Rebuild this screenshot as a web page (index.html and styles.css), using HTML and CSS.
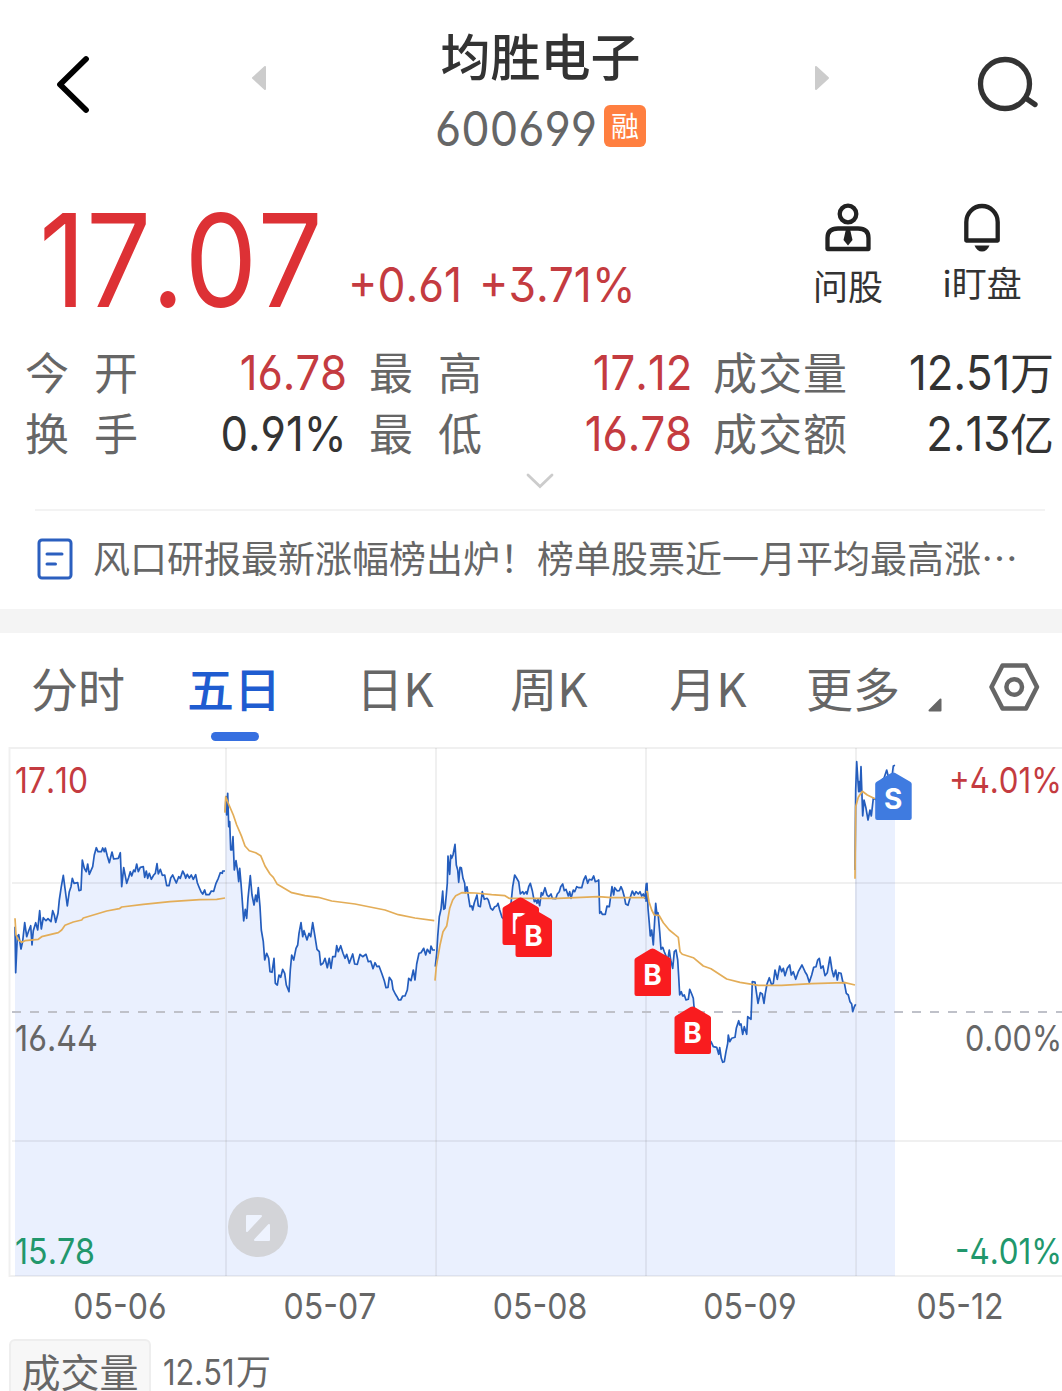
FILE: index.html
```html
<!DOCTYPE html>
<html lang="zh-CN">

<head>
	<meta charset="utf-8">
	<title>均胜电子 600699</title>
	<link rel="stylesheet" href="styles.css">
</head>

<body>
	<header class="topbar">
		<svg class="back" width="40" height="64" viewBox="0 0 40 64">
			<path d="M33 7 L7 32.500 L33 58" fill="none" stroke="#000" stroke-width="5.800" stroke-linecap="round" stroke-linejoin="round" />
		</svg>
		<svg class="prev" width="16" height="26" viewBox="0 0 16 26">
			<path d="M14 2 L14 24 L2 13 Z" fill="#ccc" stroke="#ccc" stroke-width="2" stroke-linejoin="round" />
		</svg>
		<div class="stock">
			<h1>均胜电子</h1>
			<div class="code"><span class="num">600699</span><span class="tag">融</span></div>
		</div>
		<svg class="next" width="16" height="26" viewBox="0 0 16 26">
			<path d="M2 2 L2 24 L14 13 Z" fill="#ccc" stroke="#ccc" stroke-width="2" stroke-linejoin="round" />
		</svg>
		<svg class="search" width="64" height="60" viewBox="0 0 64 60">
			<g fill="none" stroke="#333" stroke-width="5.300" stroke-linecap="round">
				<circle cx="30" cy="30" r="24.500" />
				<path d="M52 45 L60 50.500" />
			</g>
		</svg>
	</header>

	<section class="quote">
		<div class="price"><span class="num">17.07</span></div>
		<div class="change"><span class="num">+0.61</span><span class="num">+3.71%</span></div>
		<div class="action ask">
			<svg width="48" height="50" viewBox="0 0 48 50">
				<g fill="none" stroke="#222" stroke-width="4.300">
					<circle cx="24" cy="11" r="8.300" />
					<path d="M3.500 46 V35 Q3.500 25.500 14 25.500 H34 Q44.500 25.500 44.500 35 V46 Z" stroke-linejoin="round" />
				</g>
				<path d="M22 26 H26 L28.500 37 L24 42.500 L19.500 37 Z" fill="#222" />
			</svg>
			<span>问股</span>
		</div>
		<div class="action watch">
			<svg width="48" height="50" viewBox="0 0 48 50">
				<path d="M8.300 37.500 V19 A15.700 16 0 0 1 39.700 19 V37.500 Z" fill="none" stroke="#222" stroke-width="4.300" stroke-linejoin="round" />
				<path d="M16.500 42.500 H31.500 Q29 48.500 24 48.500 Q19 48.500 16.500 42.500 Z" fill="#222" />
			</svg>
			<span>i盯盘</span>
		</div>
	</section>

	<section class="stats">
		<span class="label">今 开</span><span class="value red"><span class="num">16.78</span></span>
		<span class="label">最 高</span><span class="value red"><span class="num">17.12</span></span>
		<span class="label">成交量</span><span class="value"><span class="num">12.51</span>万</span>
		<span class="label">换 手</span><span class="value"><span class="num">0.91%</span></span>
		<span class="label">最 低</span><span class="value red"><span class="num">16.78</span></span>
		<span class="label">成交额</span><span class="value"><span class="num">2.13</span>亿</span>
	</section>
	<div class="expand">
		<svg width="30" height="18" viewBox="0 0 30 18">
			<path d="M3 3 L15 14.500 L27 3" fill="none" stroke="#ccc" stroke-width="2.800" stroke-linecap="round" />
		</svg>
	</div>

	<section class="news">
		<svg width="36" height="42" viewBox="0 0 36 42">
			<g fill="none" stroke="#2b5fbf" stroke-width="3" stroke-linecap="round">
				<rect x="2" y="2" width="32" height="38" rx="3" />
				<path d="M10 16 H25 M10 26 H18.500" />
			</g>
		</svg>
		<p>风口研报最新涨幅榜出炉！榜单股票近一月平均最高涨<span class="dots">⋯</span></p>
	</section>

	<nav class="tabs">
		<span>分时</span>
		<span class="active">五日</span>
		<span>日K</span>
		<span>周K</span>
		<span>月K</span>
		<span>更多</span>
		<svg class="corner" width="14" height="14" viewBox="0 0 14 14">
			<path d="M12.500 1.500 V12.500 H1.500 Z" fill="#666" stroke="#666" stroke-width="2" stroke-linejoin="round" />
		</svg>
		<svg class="gear" width="52" height="48" viewBox="0 0 52 48">
			<g fill="none" stroke="#666" stroke-width="4.500" stroke-linejoin="round">
				<path d="M14.500 2.500 H38 L49 24 L38 45.500 H14.500 L3.500 24 Z" />
				<circle cx="26.200" cy="24" r="7.800" />
			</g>
		</svg>
	</nav>

	<svg class="chart" width="1062" height="531" viewBox="0 747 1062 531">
		<defs>
			<path id="house" d="M2 48 Q0 48 0 46 V12 Q0 10.500 1.500 9.800 L16 1 Q18 0 20 1 L35 9.800 Q36.500 10.500 36.500 12 V46 Q36.500 48 34.500 48 Z" />
		</defs>
		<g id="areas" fill="#eaf0fe"></g>
		<g fill="none" stroke="#000" stroke-opacity=".06" stroke-width="2">
			<path d="M1062 748 H9.500 V1276 H1062" />
			<path d="M12 883 H1062 M12 1141 H1062" />
			<path d="M226 748 V1276 M436 748 V1276 M646 748 V1276 M856 748 V1276" />
		</g>
		<path d="M12 1012 H1062" stroke="#bfc1c9" stroke-width="2" stroke-dasharray="9 9" />
		<g id="lines" fill="none" stroke-width="1.700" stroke-linejoin="round"></g>

		<g class="axis">
			<text x="15" y="793" textLength="73" lengthAdjust="spacingAndGlyphs" fill="#c43b40">17.10</text>
			<text x="15" y="1051" textLength="83" lengthAdjust="spacingAndGlyphs" fill="#666">16.44</text>
			<text x="15" y="1264" textLength="80" lengthAdjust="spacingAndGlyphs" fill="#21976c">15.78</text>
			<text x="949" y="793" textLength="113" lengthAdjust="spacingAndGlyphs" fill="#c43b40">+4.01%</text>
			<text x="965" y="1051" textLength="97" lengthAdjust="spacingAndGlyphs" fill="#666">0.00%</text>
			<text x="955" y="1264" textLength="107" lengthAdjust="spacingAndGlyphs" fill="#21976c">-4.01%</text>
		</g>

		<g class="marks">
			<g transform="translate(502.500 897)"><use href="#house" fill="#f91c1f" /><text x="18" y="37">B</text></g>
			<g transform="translate(515.500 909)"><use href="#house" fill="#f91c1f" /><text x="18" y="37">B</text></g>
			<g transform="translate(634.500 948)"><use href="#house" fill="#f91c1f" /><text x="18" y="37">B</text></g>
			<g transform="translate(674.500 1006)"><use href="#house" fill="#f91c1f" /><text x="18" y="37">B</text></g>
			<g transform="translate(875.200 772)"><use href="#house" fill="#3f7be0" /><text x="18" y="37">S</text></g>
		</g>

		<circle cx="258" cy="1227" r="30" fill="#d3d4d8" />
		<path d="M247 1216 H261 L247 1231 Z M269 1225 V1240 H255 Z" fill="#eef3fe" stroke="#eef3fe" stroke-width="2" stroke-linejoin="round" />
	</svg>

	<div class="dates">
		<span class="num">05-06</span><span class="num">05-07</span><span class="num">05-08</span><span class="num">05-09</span><span class="num">05-12</span>
	</div>
	<div class="volume">
		<span class="box">成交量</span>
		<span class="amount"><span class="num">12.51</span>万</span>
	</div>
	<script src="script.js"></script>
</body>

</html>
```
FILE: styles.css
```css
* {
	box-sizing: border-box;
}

body {
	margin: 0;
	width: 1062px;
	height: 1391px;
	overflow: hidden;
	background: #fff;
	color: #666;
	font-family: "Noto Sans CJK SC", sans-serif;
}

svg {
	display: block;
	flex: none;
}

/* narrow figures */
.num {
	display: inline-block;
	font-family: Inter, sans-serif;
	font-feature-settings: "ss01";
	font-kerning: none;
	transform: scaleX(.91);
	transform-origin: left;
}

.topbar {
	display: grid;
	grid-template-columns: 250px 150px 281px 131px 250px;
	grid-template-rows: 170px;
}

.topbar > * {
	grid-row: 1;
}

.back {
	grid-column: 1;
	margin: 52px 0 0 53px;
}

.prev {
	grid-column: 2;
	margin: 65px 0 0 1px;
}

.stock {
	grid-column: 3;
	text-align: center;
}

.next {
	grid-column: 5;
	margin: 65px 0 0 2px;
}

.search {
	grid-column: 5;
	margin: 54px 0 0 163px;
}

h1 {
	margin: 19px 0 0;
	color: #333;
	font-size: 50px;
	font-weight: 500;
	line-height: 70px;
}

.code {
	display: flex;
	justify-content: center;
	margin-top: 7px;
	font-size: 48px;
	line-height: 66px;
}

.code .num {
	width: 169px;
	text-align: left;
	transform: scaleX(.94);
}

.tag {
	width: 42px;
	height: 42px;
	margin-top: 9px;
	border-radius: 6px;
	background: #ff7f40;
	color: #fff;
	font-size: 28px;
	line-height: 41px;
	text-align: center;
}

.quote {
	display: grid;
	grid-template-columns: 348px 430px 140px 128px;
	height: 171px;
}

.price {
	padding-left: 39px;
	color: #dd3135;
	font-size: 129px;
	line-height: 180px;
}

.price .num {
	display: block;
	transform: scaleX(.895);
}

.change {
	display: flex;
	padding-top: 84px;
	color: #c43b40;
	font-size: 48px;
	line-height: 62px;
}

.change .num {
	width: 131px;
	transform: scaleX(.925);
}

.action {
	display: flex;
	flex-direction: column;
	align-items: center;
	padding-top: 33px;
	color: #333;
	font-size: 35px;
	line-height: 50px;
}

.ask span {
	margin-top: 7px;
}

.watch span {
	margin-top: 4px;
}

.stats {
	display: grid;
	grid-template-columns: 138px 209px 135px 210px 155px 207px;
	grid-template-rows: 61px 61px;
	font-size: 44px;
	line-height: 60px;
	white-space: nowrap;
}

.label {
	padding-left: 25px;
	text-align-last: justify;
}

.label:nth-child(6n + 3) {
	padding-left: 22px;
}

.label:nth-child(6n + 5) {
	padding-left: 21px;
}

.value {
	color: #333;
	text-align: right;
}

.value .num {
	font-size: 48px;
	transform-origin: right;
}

.value.red {
	color: #c43b40;
}

.expand {
	display: flex;
	justify-content: center;
	height: 46px;
	padding: 9px 0 0 17px;
}

.news {
	display: flex;
	align-items: center;
	gap: 20px;
	height: 100px;
	margin: 0 17px 0 35px;
	padding: 0 0 2px 2px;
	border-top: 2px solid #f3f3f3;
}

.news p {
	margin: -5px 0 0;
	font-size: 37px;
	line-height: 54px;
	white-space: nowrap;
}

.tabs {
	display: grid;
	grid-template-columns: 156px 156px 166px 142px 176px 114px 78px 74px;
	height: 138px;
	border-top: 24px solid #f4f4f4;
	font-size: 47px;
	line-height: 108px;
	text-align: center;
}

.active {
	color: #1f5cd0;
	font-weight: 500;
}

.active::after {
	content: "";
	display: block;
	width: 48px;
	height: 9px;
	margin: -9px auto 0;
	border-radius: 5px;
	background: #366fe0;
	transform: translateX(1px);
}

.corner {
	margin: 65px 0 0 18px;
}

.gear {
	margin: 30px 0 0;
}

.axis text {
	font: 36px Inter, sans-serif;
	font-feature-settings: "ss01";
	font-kerning: none;
}

.marks text {
	fill: #fff;
	font: bold 28px Inter, sans-serif;
	text-anchor: middle;
}

.dates {
	display: grid;
	grid-template-columns: repeat(5, 210px);
	padding-left: 15px;
	font-size: 36px;
	line-height: 57px;
	text-align: center;
}

.dates .num {
	transform: scaleX(.89);
	transform-origin: center;
}

.volume {
	display: flex;
	gap: 12px;
	padding: 4px 0 0 9px;
	font-size: 35px;
	line-height: 62px;
}

.box {
	width: 142px;
	border: 2px solid #eee;
	border-radius: 6px;
	background: #f7f7f7;
	font-size: 39px;
	line-height: 58px;
	text-align: center;
}

.amount .num {
	width: 73px;
	transform: scaleX(.88);
}
```
FILE: script.js
```js
// x,y pairs of every day, in thirds of a pixel from the day's origin
var days = [
	{
		x: 0, y: 740, from: 45, to: 678,
		price: "45,560 47,698 52,590 56,584 63,627 68,603 74,548 80,590 86,572 92,557 96,615 100,572 107,548 113,570 119,512 124,567 130,533 138,542 144,536 150,542 153,545 158,512 163,525 167,547 174,520 178,480 184,440 190,406 195,445 202,498 208,455 213,440 217,415 222,430 233,428 237,452 243,450 247,360 253,385 259,395 263,372 268,403 278,380 283,345 289,323 294,335 304,335 308,324 313,335 316,324 322,348 328,368 336,336 341,357 355,355 361,338 365,440 371,383 380,430 386,412 391,395 395,408 401,390 405,395 410,372 415,395 421,382 430,380 434,412 439,393 443,415 448,400 454,418 461,405 466,400 471,371 475,402 481,388 487,406 494,405 500,437 507,437 512,414 518,405 523,416 529,429 536,410 541,415 548,393 554,405 557,415 562,403 568,414 574,405 580,418 587,404 592,428 598,443 603,455 608,462 614,450 618,464 628,464 634,453 641,454 648,430 655,415 661,398 667,400 668,393 675,393",
		avg: "45,535 48,585 55,600 65,607 75,602 115,598 125,590 175,578 185,570 195,556 220,546 245,540 250,534 290,522 320,513 358,506 365,501 430,493 510,485 600,479 650,478 675,474"
	},
	{
		x: 215, y: 740, from: 33, to: 662,
		price: "31,215 33,170 35,225 38,160 41,260 44,245 47,330 51,330 54,290 58,390 63,362 68,395 71,425 74,385 78,430 81,470 86,543 91,508 95,535 99,475 106,407 111,465 117,495 122,465 126,485 130,443 135,500 139,570 145,605 149,660 155,640 161,655 165,695 171,697 177,655 181,730 187,735 192,705 197,712 203,688 209,700 214,735 222,755 226,690 230,645 236,660 243,625 248,615 252,580 258,548 263,590 267,572 276,600 282,580 287,590 293,548 300,590 306,628 313,635 317,675 324,670 330,655 337,683 343,655 348,685 353,650 361,650 365,617 370,635 377,617 384,640 390,655 395,643 403,670 413,642 419,672 427,673 435,643 443,650 453,643 460,665 467,663 474,686 480,668 486,680 492,678 500,700 508,722 513,743 519,742 523,712 530,722 534,748 541,762 546,770 551,780 557,780 563,768 570,768 577,750 581,715 588,722 595,690 600,720 605,672 612,640 618,638 626,625 632,645 637,628 645,640 648,618 653,630 660,630",
		avg: "30,218 32,170 40,190 55,225 65,255 80,290 90,318 103,332 122,338 137,347 150,378 165,402 175,412 187,433 205,443 230,458 270,467 310,472 350,483 420,492 510,510 550,524 600,534 658,542"
	},
	{
		x: 425, y: 820, from: 32, to: 663,
		price: "31,440 35,400 38,350 43,290 48,268 53,213 56,268 60,265 64,225 67,190 69,108 74,163 77,105 80,115 84,105 90,73 94,135 98,150 101,187 105,142 109,143 114,175 119,190 121,218 126,200 131,235 135,260 140,258 143,270 148,248 156,225 160,258 166,260 172,215 178,238 186,235 190,240 197,265 203,270 209,260 215,258 219,250 224,270 231,292 240,300 250,280 258,250 263,200 269,165 275,175 281,185 286,222 293,215 297,222 303,215 306,222 311,200 316,190 322,212 328,245 332,240 336,250 339,238 344,257 349,218 353,225 360,203 366,225 371,230 378,222 382,235 392,236 397,222 403,215 407,200 413,192 418,212 423,208 430,228 434,215 438,235 445,210 449,215 455,200 462,203 470,203 476,180 482,168 488,190 493,178 500,180 506,168 511,185 518,182 521,180 524,280 528,275 532,283 541,283 546,258 553,260 561,200 566,225 569,203 577,213 583,212 588,200 593,212 598,230 602,252 609,256 615,235 622,213 628,225 633,215 640,222 645,215 650,228 655,222 660,235 664,190",
		avg: "30,482 34,440 45,375 54,335 65,318 74,265 83,240 92,227 110,218 150,219 200,224 240,227 252,235 400,235 520,230 560,233 660,233"
	},
	{
		x: 625, y: 860, from: 63, to: 692,
		price: "63,125 66,70 69,145 73,190 76,228 80,210 85,255 89,180 92,130 96,165 99,158 104,215 108,268 113,262 118,275 128,300 133,270 137,300 143,325 148,275 153,270 158,300 161,350 164,405 169,395 173,408 178,405 183,420 190,418 194,388 200,402 205,415 207,440 220,500 240,530 258,545 265,560 275,562 281,583 284,563 289,595 293,607 298,605 303,575 308,550 310,525 314,545 320,535 330,532 334,505 341,482 344,495 348,492 353,523 358,500 365,523 368,470 378,478 380,420 382,365 390,366 394,395 399,430 406,398 412,402 417,430 421,400 426,372 433,353 440,375 445,370 450,330 457,358 464,318 470,335 475,325 480,347 487,325 494,315 499,345 505,335 512,358 520,335 531,315 540,335 546,345 553,367 560,345 566,322 573,320 578,300 583,295 588,325 594,318 600,347 607,338 615,291 621,330 626,350 632,330 637,360 641,338 648,340 654,368 658,368 664,400 670,405 675,425 680,432 683,455 688,440 692,433",
		avg: "63,95 67,95 72,125 80,150 88,165 102,166 115,188 133,210 150,224 160,232 165,275 172,283 205,293 235,318 258,326 305,357 345,367 400,376 470,376 560,371 660,368 690,375"
	},
	{
		x: 830, y: 740, from: 77, to: 195,
		price: "75,390 77,150 80,65 84,125 86,155 88,125 90,155 93,80 98,228 102,180 108,205 114,240 120,210 124,228 130,175 140,180 155,120 162,115 170,90 176,115 186,110 190,78 195,76",
		avg: "75,416 77,200 85,172 97,154 112,165 135,176"
	}
];

function toPoints(day, text) {
	return text.split(" ").map(function (pair) {
		var p = pair.split(",");
		return (day.x + p[0] / 3).toFixed(1) + "," + (day.y + p[1] / 3).toFixed(1);
	}).join(" ");
}

function add(parent, tag, points, stroke) {
	var el = document.createElementNS("http://www.w3.org/2000/svg", tag);
	el.setAttribute("points", points);
	if (stroke) {
		el.setAttribute("stroke", stroke);
	}
	document.getElementById(parent).appendChild(el);
}

days.forEach(function (day) {
	var price = toPoints(day, day.price);
	var left = day.x + day.from / 3;
	var right = day.x + day.to / 3;
	add("areas", "polygon", left + ",1276 " + price + " " + right + ",1276");
	add("lines", "polyline", price, "#245dbd");
	add("lines", "polyline", toPoints(day, day.avg), "#e3ad58");
});
```
